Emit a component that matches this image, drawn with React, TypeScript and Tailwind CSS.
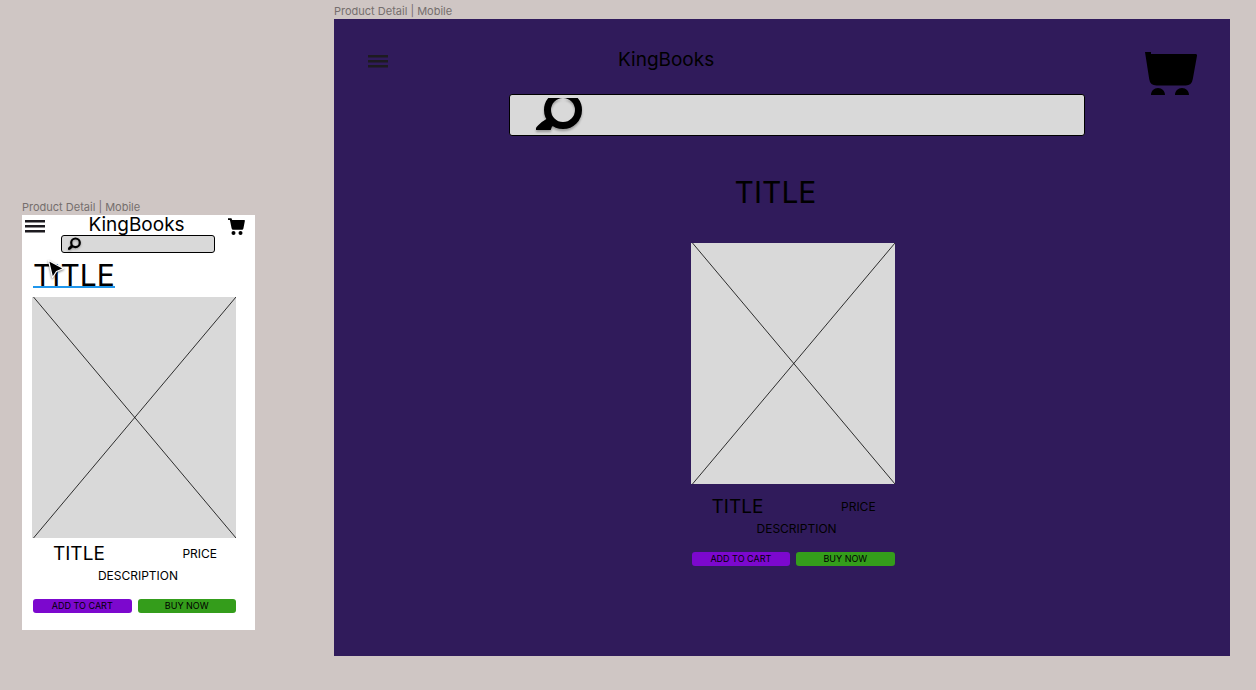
import { useId } from "react";

function MenuButton() {
  return (
    <button type="button" aria-label="Menu" className="block h-[13px] w-5">
      <svg viewBox="0 0 20 13" className="block h-full w-full" fill="#1d1b20">
        <path d="M0 0h20v2.600H0zM0 5h20v2.600H0zM0 10h20v2.600H0z" />
      </svg>
    </button>
  );
}

function SmallCart() {
  return (
    <svg viewBox="0 0 18 18" className="block h-[18px] w-[18px]">
      <path d="M0 .3h3.400l.8 1.800h11.800c.7 0 1 .5.8 1.100l-1.400 7.300c-.3.9-.8 1.300-1.600 1.300H5.300q-1.500 0-1.700-1.500L1.900 1.900H0z" />
      <circle cx="5.500" cy="15" r="2" />
      <circle cx="12.500" cy="15" r="2" />
    </svg>
  );
}

function LargeCart() {
  return (
    <svg viewBox="0 0 52 43" className="block h-[43px] w-[52px]">
      <path d="M0 0h6v2h44.500q1.700 0 1.500 1.800L47.800 27q-1 6.500-7 6.500H11.500q-6.500 0-7.300-6.500z" />
      <path d="M6 43c0-4 3-7 7-7s7 3 7 7zM30 43c0-4 3-7 7-7s7 3 7 7z" />
    </svg>
  );
}

function SmallSearchIcon() {
  return (
    <svg viewBox="0 0 14 14" className="block h-[14px] w-[14px] drop-shadow-[0_1px_1px_rgba(0,0,0,0.3)]">
      <circle cx="8.500" cy="5.800" r="4.300" fill="none" stroke="#000" strokeWidth="2.200" />
      <path d="M4.400 7.600 6.600 9.800 3 12.800 1.200 13 1 11z" />
    </svg>
  );
}

function LargeSearchIcon() {
  return (
    <svg viewBox="0 0 46 32" className="block h-8 w-[46px] drop-shadow-[0_2px_1px_rgba(0,0,0,0.3)]">
      <circle cx="27" cy="12" r="15.500" fill="none" stroke="#000" strokeWidth="7" />
      <path d="M0 32v-2q.6-1.500 2-2.600 4-4 10-7.400l7 7.500-3 1-1.300 3.500z" />
    </svg>
  );
}

function Product({ className }: { className: string }) {
  return (
    <section className="w-[204px]">
      <svg
        viewBox="0 0 204 241"
        role="img"
        aria-label="Product image"
        className="block h-[241px] w-[204px] bg-[#d9d9d9]"
      >
        <path d="M1.500 0 204 241M204 0 1.500 241" stroke="#000" strokeWidth="0.8" />
      </svg>
      <div className={className}>
        <div className="flex items-center justify-between pr-[19px] pl-[21px]">
          <h3 className="text-[19px] leading-6">TITLE</h3>
          <p className="text-[12px] leading-6">PRICE</p>
        </div>
        <p className="pl-2 text-center text-[12px] leading-5">DESCRIPTION</p>
        <div className="mt-[13px] grid grid-cols-2 gap-[6px] pl-px text-[9px] leading-[14px]">
          <button type="button" className="rounded-[3px] bg-[#7c08ce]">
            ADD TO CART
          </button>
          <button type="button" className="rounded-[3px] bg-[#349d1b]">
            BUY NOW
          </button>
        </div>
      </div>
    </section>
  );
}

function MobileBoard() {
  const searchId = useId();
  return (
    <article className="w-[233px] shrink-0 pt-[200px]">
      <h2 className="text-[11px] leading-[15px] text-[#756e6d]">Product Detail | Mobile</h2>
      <div className="bg-white pb-[17px]">
        <header className="flex h-5 items-center justify-between pr-[9px] pl-[3px]">
          <div className="pt-[3px]">
            <MenuButton />
          </div>
          <h1 className="pb-px text-[19px] leading-5">KingBooks</h1>
          <button type="button" aria-label="Cart" className="pt-[3px]">
            <SmallCart />
          </button>
        </header>
        <div className="mr-10 ml-[39px] flex h-[18px] items-center rounded-[3px] border border-black bg-[#d9d9d9] pl-[5px]">
          <label htmlFor={searchId} aria-label="Search">
            <SmallSearchIcon />
          </label>
          <input id={searchId} type="search" className="h-3 w-full min-w-0 bg-transparent text-[10px] outline-none" />
        </div>
        <div className="relative ml-[11px] flex h-11 items-start pt-3">
          <h2 className="border-b-2 border-[#1f96ec] text-[30px] leading-[21px]">TITLE</h2>
          <svg viewBox="0 0 18 20" className="absolute top-[6px] left-[14px] h-5 w-[18px] drop-shadow-[0_1px_1px_rgba(0,0,0,0.5)]">
            <path d="M1.500 1.500 5.500 18.500 9.500 12.500 16.500 9.500z" stroke="#fff" strokeWidth="1.200" strokeLinejoin="round" />
          </svg>
        </div>
        <div className="pl-[10px]">
          <Product className="pt-1" />
        </div>
      </div>
    </article>
  );
}

function DesktopBoard() {
  const searchId = useId();
  return (
    <article className="min-w-0 flex-1 pt-1">
      <h2 className="text-[11px] leading-[15px] text-[#756e6d]">Product Detail | Mobile</h2>
      <div className="bg-[#301b5b] pb-[90px]">
        <header className="grid h-[75px] grid-cols-[20px_230fr_94px_433fr_52px] items-start pt-[33px] pr-[33px] pl-[34px]">
          <div className="pt-[3px]">
            <MenuButton />
          </div>
          <h1 className="col-start-3 -mt-1 text-[19px] leading-6">KingBooks</h1>
          <button type="button" aria-label="Cart" className="col-start-5">
            <LargeCart />
          </button>
        </header>
        <div className="mr-[16.2%] ml-[19.5%] flex h-[42px] items-start rounded-[3px] border border-black bg-[#d9d9d9] pt-[3px] pl-[26px]">
          <label htmlFor={searchId} aria-label="Search">
            <LargeSearchIcon />
          </label>
          <input id={searchId} type="search" className="h-8 w-full min-w-0 bg-transparent px-2 outline-none" />
        </div>
        <div className="pl-[39.8%]">
          <h2 className="pt-9 pb-[31px] pl-11 text-[30px] leading-10">TITLE</h2>
          <Product className="pt-[11px]" />
        </div>
      </div>
    </article>
  );
}

export default function App() {
  return (
    <main className="flex min-h-screen items-start gap-[79px] bg-[#cfc6c4] pr-[26px] pl-[22px] font-['Inter',sans-serif] text-black">
      <MobileBoard />
      <DesktopBoard />
    </main>
  );
}
